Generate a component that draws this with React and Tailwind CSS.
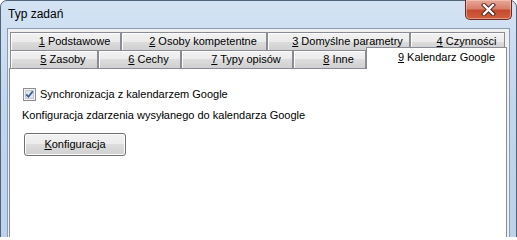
const TOP_TABS = [
  { n: '1', label: 'Podstawowe', w: 'w-[111px]' },
  { n: '2', label: 'Osoby kompetentne', w: 'w-[146px]' },
  { n: '3', label: 'Domyślne parametry', w: 'w-[143px]' },
  { n: '4', label: 'Czynności', w: 'w-[95px]' },
]

const BOTTOM_TABS = [
  { n: '5', label: 'Zasoby', w: 'w-[88px]' },
  { n: '6', label: 'Cechy', w: 'w-[83px]' },
  { n: '7', label: 'Typy opisów', w: 'w-[112px]' },
  { n: '8', label: 'Inne', w: 'w-[73px]' },
]

function Tab({ n, label, w }) {
  return (
    <div
      className={`${w} h-[18px] shrink-0 border border-b-0 border-[#898c95] bg-[linear-gradient(#f2f2f2_0%,#ebebeb_50%,#dddddd_50%,#cfcfcf_100%)] shadow-[inset_1px_1px_0_#fcfcfc] flex items-center justify-center pl-[18px] leading-none`}
    >
      <span>
        <u>{n}</u> {label}
      </span>
    </div>
  )
}

function CloseButton() {
  return (
    <div className="w-[47px] h-[20px] -mt-px rounded-b-[5px] border border-[#6b2a20] border-t-0 bg-[linear-gradient(#e8a898_0%,#d8806b_45%,#c64a2f_55%,#d0603f_100%)] shadow-[inset_0_0_0_1px_rgba(255,210,200,0.5)] flex items-center justify-center">
      <svg width="15" height="13" viewBox="0 0 15 13">
        <path d="M3 2 L12 11 M12 2 L3 11" stroke="#4b1e17" strokeWidth="4.2" strokeLinecap="square" />
        <path d="M3 2 L12 11 M12 2 L3 11" stroke="#ffffff" strokeWidth="2.4" strokeLinecap="square" />
      </svg>
    </div>
  )
}

function Checkbox() {
  return (
    <svg width="13" height="13" viewBox="0 0 13 13" className="shrink-0">
      <rect x="0.5" y="0.5" width="12" height="12" fill="#f4f4f4" stroke="#8e8f8f" />
      <rect x="2.5" y="2.5" width="8" height="8" fill="#e2e6ea" stroke="#c4c9cf" />
      <path d="M3.2 6.4 L5.4 8.8 L9.8 3.4" fill="none" stroke="#3a5a9e" strokeWidth="1.7" />
    </svg>
  )
}

export default function App() {
  return (
    <div className="w-[517px] h-[237px] overflow-hidden bg-white font-['Liberation_Sans',Arial,sans-serif] text-[11px] text-black">
      <div className="w-[517px] h-[260px] rounded-t-[7px] border border-[#4f6379] bg-[linear-gradient(#d3e3f4_0%,#c2d6ec_40%,#bcd2ea_100%)] flex flex-col">
        {/* title bar */}
        <div className="h-[27px] flex items-start justify-between pr-[4px]">
          <div className="pl-[7px] pt-[7px] text-[12px] leading-none text-black">Typ zadań</div>
          <CloseButton />
        </div>

        {/* client area */}
        <div className="flex-1 mx-[6px] border border-[#8a9cb3] bg-[#f0f0f0] pl-px pr-[2px] pt-[3px] flex flex-col">
          <div className="flex pl-px">
            {TOP_TABS.map(t => (
              <Tab key={t.n} {...t} />
            ))}
          </div>
          <div className="flex pl-px h-[18px] items-end">
            {BOTTOM_TABS.map(t => (
              <Tab key={t.n} {...t} />
            ))}
            <div className="relative z-10 w-[141px] h-[22px] shrink-0 -mb-px border border-b-0 border-[#898c95] bg-white flex justify-center pl-[20px] pt-[4px] leading-none">
              <span>
                <u>9</u> Kalendarz Google
              </span>
            </div>
          </div>

          <div className="flex-1 border border-[#898c95] bg-white pl-[13px] pt-[19px]">
            <div className="flex items-center gap-[4px] h-[13px]">
              <Checkbox />
              <span className="leading-none">Synchronizacja z kalendarzem Google</span>
            </div>
            <div className="mt-[9px] -ml-px leading-none">
              Konfiguracja zdarzenia wysyłanego do kalendarza Google
            </div>
            <button className="block mt-[12px] ml-px w-[102px] h-[23px] rounded-[3px] border border-[#707070] bg-[linear-gradient(#f2f2f2_0%,#ebebeb_50%,#dddddd_50%,#cfcfcf_100%)] shadow-[inset_0_0_0_1px_#fcfcfc] leading-none">
              <u>K</u>onfiguracja
            </button>
          </div>
        </div>
      </div>
    </div>
  )
}
